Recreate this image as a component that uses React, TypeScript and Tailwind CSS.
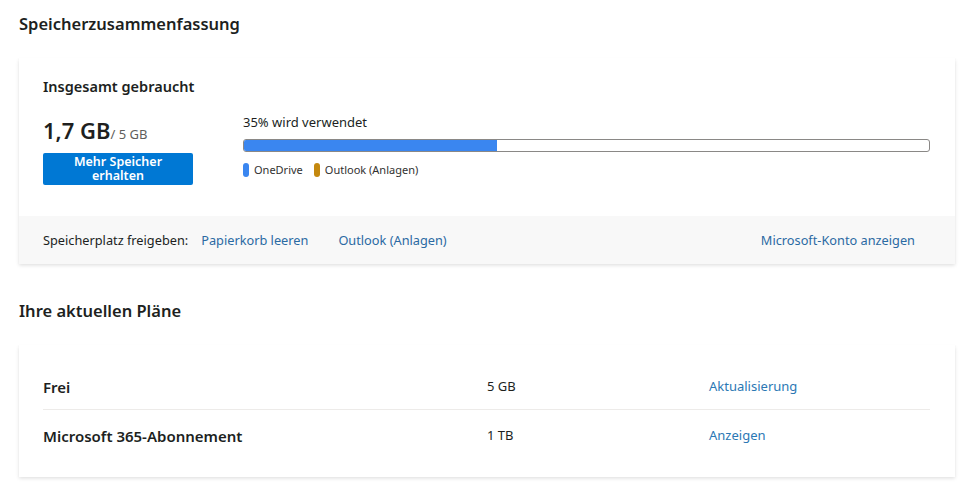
const PLANS = [
  { name: "Frei", size: "5 GB", action: "Aktualisierung" },
  { name: "Microsoft 365-Abonnement", size: "1 TB", action: "Anzeigen" },
];

const cardShadow =
  "shadow-[0_1.6px_3.6px_rgba(0,0,0,0.13),0_0.3px_0.9px_rgba(0,0,0,0.11)]";

export default function App() {
  return (
    <div className="w-[976px] h-[495px] bg-white px-[19px] pt-[12px] text-[#323130] font-['Noto_Sans',sans-serif] overflow-hidden">
      {/* Storage summary */}
      <h2 className="text-[16.5px] leading-[24px] font-semibold text-[#201f1e]">
        Speicherzusammenfassung
      </h2>

      <div className={`mt-[22px] w-[936px] bg-white ${cardShadow}`}>
        <div className="px-6 pt-[18px] pb-[31px]">
          <div className="text-[14.5px] leading-[20px] font-semibold text-[#201f1e]">
            Insgesamt gebraucht
          </div>
          <div className="mt-[16px] flex">
            <div className="w-[200px] shrink-0">
              <div className="mt-[4px] h-[28px] flex items-baseline text-[#201f1e]">
                <span className="text-[22px] leading-[28px] font-semibold">1,7 GB</span>
                <span className="text-[13px] text-[#605e5c]">/ 5 GB</span>
              </div>
              <button
                type="button"
                className="block mt-[9px] w-[150px] h-[32px] px-[20px] rounded-[2px] bg-[#0078d4] text-white text-[12.5px] leading-[14px] font-semibold text-center"
              >
                Mehr Speicher erhalten
              </button>
            </div>
            <div className="flex-1 pr-[1px]">
              <div className="mt-[1px] text-[13px] leading-[18px] text-[#201f1e]">
                35% wird verwendet
              </div>
              <div className="mt-[8px] h-[13px] rounded-[3px] border border-[#8a8886] overflow-hidden">
                <div className="h-full bg-[#3a86f0]" style={{ width: "37%" }} />
              </div>
              <div className="mt-[11px] flex items-center text-[11px] leading-[14px] text-[#323130]">
                <span className="w-[6px] h-[14px] rounded-full bg-[#3a86f0]" />
                <span className="ml-[5px]">OneDrive</span>
                <span className="ml-[11px] w-[6px] h-[14px] rounded-full bg-[#c4880f]" />
                <span className="ml-[5px]">Outlook (Anlagen)</span>
              </div>
            </div>
          </div>
        </div>
        <div className="h-[48px] bg-[#f8f8f8] flex items-center pt-[2px] pl-6 pr-[40px] text-[12.75px]">
          <span className="text-[#201f1e]">Speicherplatz freigeben:</span>
          <a className="ml-[13px] text-[#2b6aa3] cursor-pointer">Papierkorb leeren</a>
          <a className="ml-[30px] text-[#2b6aa3] cursor-pointer">Outlook (Anlagen)</a>
          <a className="ml-auto text-[#2b6aa3] cursor-pointer">Microsoft-Konto anzeigen</a>
        </div>
      </div>

      {/* Current plans */}
      <h2 className="mt-[35px] text-[16.5px] leading-[24px] font-semibold text-[#201f1e]">
        Ihre aktuellen Pläne
      </h2>

      <div className={`mt-[22px] w-[936px] bg-white px-6 pt-[20px] pb-[15px] ${cardShadow}`}>
        {PLANS.map((plan, i) => (
          <div
            key={plan.name}
            className={`grid grid-cols-[444px_222px_1fr] items-center mr-[1px] text-[13px] ${
              i === 0 ? "h-[45px] border-b border-[#edebe9]" : "h-[52px]"
            }`}
          >
            <span className="text-[15px] font-semibold text-[#201f1e]">{plan.name}</span>
            <span className="text-[#201f1e]">{plan.size}</span>
            <a className="text-[#2b78b4] cursor-pointer">{plan.action}</a>
          </div>
        ))}
      </div>
    </div>
  );
}
